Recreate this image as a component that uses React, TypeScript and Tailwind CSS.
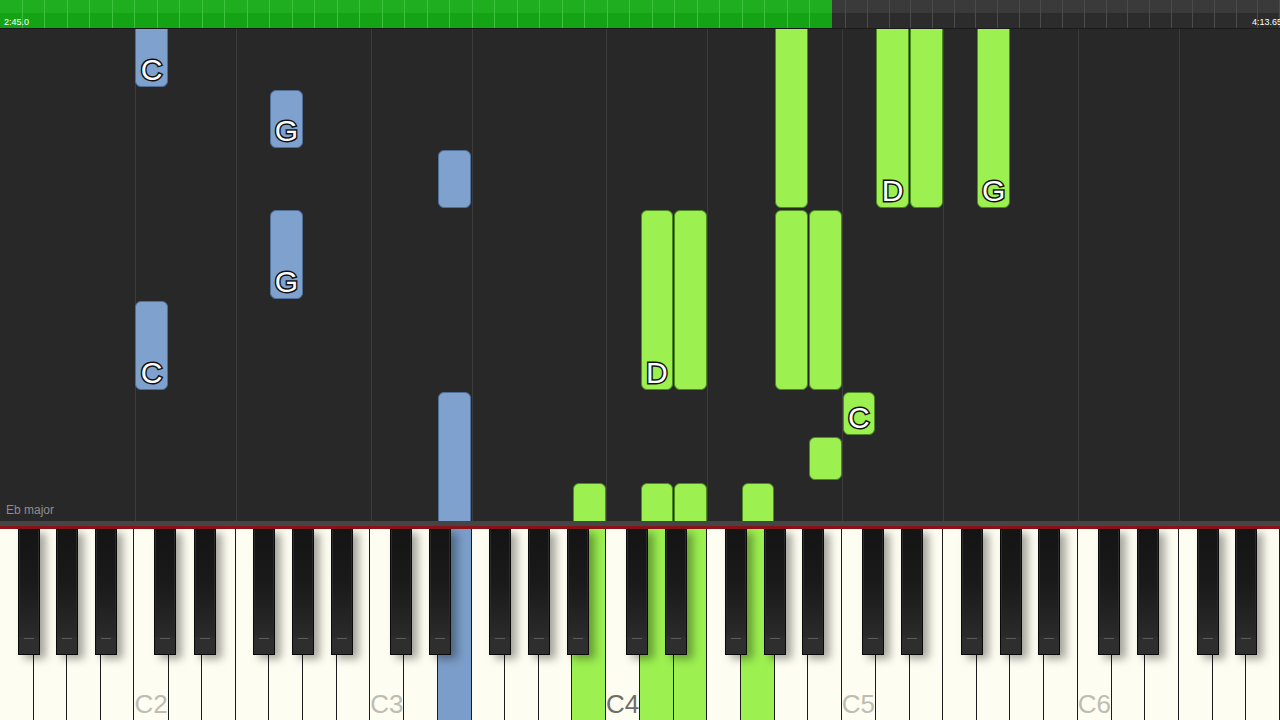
import React from "react";

const KEY_COUNT = 38;
const W = 1280 / KEY_COUNT;
const LETTERS = ["F", "G", "A", "B", "C", "D", "E"];
// offset of a black key's centre from the boundary after its white key
const BLACK_OFFSET: Record<string, number | null> = {
    F: -5,
    G: 0,
    A: 5,
    B: null,
    C: -3,
    D: 2.5,
    E: null,
};

type Hue = "blue" | "green";

interface Note {
    key: number;
    top: number;
    bottom: number;
    hue: Hue;
    label?: string;
}

// key index counted in white keys from F1, y relative to the roll
const notes: Note[] = [
    { key: 4, top: -12, bottom: 58, hue: "blue", label: "C" },
    { key: 8, top: 61, bottom: 119, hue: "blue", label: "G" },
    { key: 13, top: 121, bottom: 179, hue: "blue" },
    { key: 8, top: 181, bottom: 270, hue: "blue", label: "G" },
    { key: 4, top: 272, bottom: 361, hue: "blue", label: "C" },
    { key: 13, top: 363, bottom: 520, hue: "blue" },
    { key: 23, top: -12, bottom: 179, hue: "green" },
    { key: 26, top: -12, bottom: 179, hue: "green", label: "D" },
    { key: 27, top: -12, bottom: 179, hue: "green" },
    { key: 29, top: -12, bottom: 179, hue: "green", label: "G" },
    { key: 19, top: 181, bottom: 361, hue: "green", label: "D" },
    { key: 20, top: 181, bottom: 361, hue: "green" },
    { key: 23, top: 181, bottom: 361, hue: "green" },
    { key: 24, top: 181, bottom: 361, hue: "green" },
    { key: 25, top: 363, bottom: 406, hue: "green", label: "C" },
    { key: 24, top: 408, bottom: 451, hue: "green" },
    { key: 17, top: 454, bottom: 520, hue: "green" },
    { key: 19, top: 454, bottom: 520, hue: "green" },
    { key: 20, top: 454, bottom: 520, hue: "green" },
    { key: 22, top: 454, bottom: 520, hue: "green" },
];

const litKeys: Record<number, Hue> = {
    13: "blue",
    17: "green",
    19: "green",
    20: "green",
    22: "green",
};

const gridLines = [4, 7, 11, 14, 18, 21, 25, 28, 32, 35];

function TimeBar() {
    return (
        <div className="relative flex h-[29px] border-b border-[#1a1a1a]">
            <div className="flex w-[834px]">
                {Array.from({ length: 37 }).map((_, i) => (
                    <div
                        key={i}
                        className="flex flex-1 flex-col border-r border-[#3cc23c]"
                    >
                        <div className="h-[13px] bg-[#1fae1f]" />
                        <div className="flex-1 bg-[#14a314]" />
                    </div>
                ))}
            </div>
            <div className="flex flex-1">
                <div className="flex w-[14px] flex-col border-r border-[#4b4b4b]">
                    <div className="h-[13px] bg-[#3a3a3a]" />
                    <div className="flex-1 bg-[#2c2c2c]" />
                </div>
                {Array.from({ length: 20 }).map((_, i) => (
                    <div
                        key={i}
                        className="flex w-[21.7px] shrink-0 flex-col border-r border-[#4b4b4b]"
                    >
                        <div className="h-[13px] bg-[#3a3a3a]" />
                        <div className="flex-1 bg-[#2c2c2c]" />
                    </div>
                ))}
            </div>
            <span className="absolute left-[4px] top-[18px] font-['Liberation_Sans',sans-serif] text-[9px] leading-none text-white">
                2:45.0
            </span>
            <span className="absolute left-[1252px] top-[18px] whitespace-nowrap font-['Liberation_Sans',sans-serif] text-[9px] leading-none text-white">
                4:13.65
            </span>
        </div>
    );
}

function NoteBlock({ note }: { note: Note }) {
    const blue = note.hue === "blue";
    return (
        <div
            className={`absolute flex items-end justify-center rounded-[6px] border ${
                blue
                    ? "border-[#4f6f99] bg-[#7fa1cd]"
                    : "border-[#4d8a22] bg-[#9cf050]"
            }`}
            style={{
                left: note.key * W + 0.5,
                width: W - 1,
                top: note.top,
                height: note.bottom - note.top,
            }}
        >
            {note.label && (
                <span className="mb-[1px] font-['Liberation_Sans',sans-serif] text-[30px] leading-none font-normal text-white [-webkit-text-stroke:3px_#111] [paint-order:stroke_fill]">
                    {note.label}
                </span>
            )}
        </div>
    );
}

function Roll() {
    return (
        <div className="relative h-[492px] overflow-hidden bg-[#282828]">
            {gridLines.map((k) => (
                <div
                    key={k}
                    className="absolute top-0 bottom-0 w-px bg-[#3c3c3c]"
                    style={{ left: Math.round(k * W) }}
                />
            ))}
            {notes.map((n, i) => (
                <NoteBlock key={i} note={n} />
            ))}
            <span className="absolute left-[6px] top-[472px] font-['Liberation_Sans',sans-serif] text-[12px] text-[#8e8e8e]">
                Eb major
            </span>
        </div>
    );
}

function Keyboard() {
    const whites = Array.from({ length: KEY_COUNT }).map((_, i) => {
        const letter = LETTERS[i % 7];
        const octave = 1 + Math.floor((i + 3) / 7);
        return { i, letter, octave };
    });

    return (
        <div className="flex flex-col">
            <div className="h-[5px] bg-[#454545]" />
            <div className="h-[3px] bg-[#8a1319]" />
            <div className="relative flex h-[191px] bg-[#fdfdf1]">
                {whites.map((k) => {
                    const lit = litKeys[k.i];
                    return (
                        <div
                            key={k.i}
                            className={`relative flex flex-1 items-end justify-center border-r border-[#1c1c1c] ${
                                lit === "green"
                                    ? "bg-[#9cf050]"
                                    : lit === "blue"
                                      ? "bg-[#7b9dc9]"
                                      : "bg-[#fdfdf1]"
                            }`}
                        >
                            {k.letter === "C" && (
                                <span
                                    className={`mb-[3px] font-['Liberation_Sans',sans-serif] text-[26px] leading-none ${
                                        k.octave === 4
                                            ? "text-[#6e6e68]"
                                            : "text-[#bdbdb4]"
                                    }`}
                                >
                                    C{k.octave}
                                </span>
                            )}
                        </div>
                    );
                })}
                {whites.map((k) => {
                    const off = BLACK_OFFSET[k.letter];
                    if (off === null || k.i === KEY_COUNT - 1) return null;
                    const centre = (k.i + 1) * W + off;
                    return (
                        <div
                            key={`b${k.i}`}
                            className="absolute top-0 flex h-[126px] w-[22px] flex-col border border-[#0a0a0a] bg-[#0e0e0e] shadow-[6px_4px_8px_rgba(0,0,0,0.35)]"
                            style={{ left: centre - 11 }}
                        >
                            <div className="flex-1 border-x border-[#2a2a2a] bg-gradient-to-b from-[#141414] via-[#1a1a1a] to-[#2a2a2a]" />
                            <div className="flex h-[17px] flex-col items-center bg-[#2e2e2e]">
                                <div className="mt-[1px] h-px w-[10px] bg-[#5a5a5a]" />
                            </div>
                        </div>
                    );
                })}
            </div>
        </div>
    );
}

export default function App() {
    return (
        <div className="flex h-[720px] w-[1280px] flex-col overflow-hidden bg-[#282828]">
            <TimeBar />
            <Roll />
            <Keyboard />
        </div>
    );
}
